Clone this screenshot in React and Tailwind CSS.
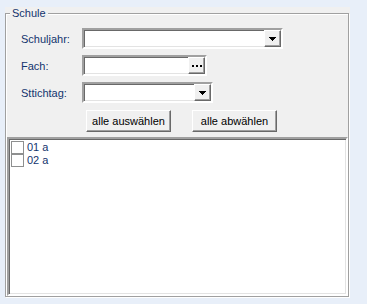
const sunken =
  "border-2 border-t-[#a0a0a0] border-l-[#a0a0a0] border-r-white border-b-white shadow-[inset_1px_1px_0_#696969,inset_-1px_-1px_0_#e3e3e3]";
const raised =
  "border border-t-white border-l-white border-r-[#696969] border-b-[#696969] shadow-[inset_-1px_-1px_0_#a0a0a0] bg-[#f0f0f0]";

function Arrow() {
  return (
    <svg width="7" height="4" viewBox="0 0 7 4" shapeRendering="crispEdges">
      <rect x="0" y="0" width="7" height="1" fill="#000" />
      <rect x="1" y="1" width="5" height="1" fill="#000" />
      <rect x="2" y="2" width="3" height="1" fill="#000" />
      <rect x="3" y="3" width="1" height="1" fill="#000" />
    </svg>
  );
}

function Dots() {
  return (
    <svg width="10" height="2" viewBox="0 0 10 2" shapeRendering="crispEdges">
      <rect x="0" y="0" width="2" height="2" fill="#000" />
      <rect x="4" y="0" width="2" height="2" fill="#000" />
      <rect x="8" y="0" width="2" height="2" fill="#000" />
    </svg>
  );
}

function Field({ label, width, children }) {
  return (
    <div className="flex items-center h-[21px]">
      <span className="w-[76px] shrink-0 pl-[15px] pt-[1px] text-[#12346e]">{label}</span>
      <div className={`${width} shrink-0 h-[21px] flex bg-white ${sunken}`}>
        <div className="flex-1" />
        <div className={`w-[17px] h-[17px] flex items-center justify-center ${raised}`}>
          {children}
        </div>
      </div>
    </div>
  );
}

function Btn({ children }) {
  return (
    <button className={`w-[85px] h-[22px] shrink-0 flex items-center justify-center text-black ${raised}`}>
      {children}
    </button>
  );
}

const items = ["01 a", "02 a"];

export default function App() {
  return (
    <div className="w-[367px] h-[304px] bg-[#e8eff9] pt-[7px] pl-[5px] font-['Liberation_Sans',Arial,sans-serif] text-[11px] leading-[13px]">
      <div className="w-[345px] h-[291px] bg-[#f0f0f0] pt-[6px]">

        {/* Groupbox */}
        <div className="relative w-[344px] h-[284px] border border-[#a0a0a0] shadow-[inset_1px_1px_0_#fff,1px_1px_0_#fff] flex flex-col">
          <span className="absolute left-[4px] top-[-7px] px-[2px] bg-[#f0f0f0] text-[#12346e]">Schule</span>

          <div className="pt-[14px] flex flex-col gap-[6px]">
            <Field label="Schuljahr:" width="w-[201px]"><Arrow /></Field>
            <Field label="Fach:" width="w-[125px]"><Dots /></Field>
            <Field label="Sttichtag:" width="w-[131px]"><Arrow /></Field>
          </div>

          <div className="mt-[7px] pl-[80px] flex gap-[21px]">
            <Btn>alle auswählen</Btn>
            <Btn>alle abwählen</Btn>
          </div>

          {/* List */}
          <div className={`mt-[5px] ml-[1px] flex-1 bg-white pt-[2px] pl-[2px] ${sunken}`}>
            {items.map((it) => (
              <div key={it} className="flex items-center h-[13px]">
                <span className="w-[13px] h-[13px] shrink-0 border border-[#8e8f8f] bg-white" />
                <span className="ml-[3px] text-[#12346e]">{it}</span>
              </div>
            ))}
          </div>
        </div>

      </div>
    </div>
  );
}
